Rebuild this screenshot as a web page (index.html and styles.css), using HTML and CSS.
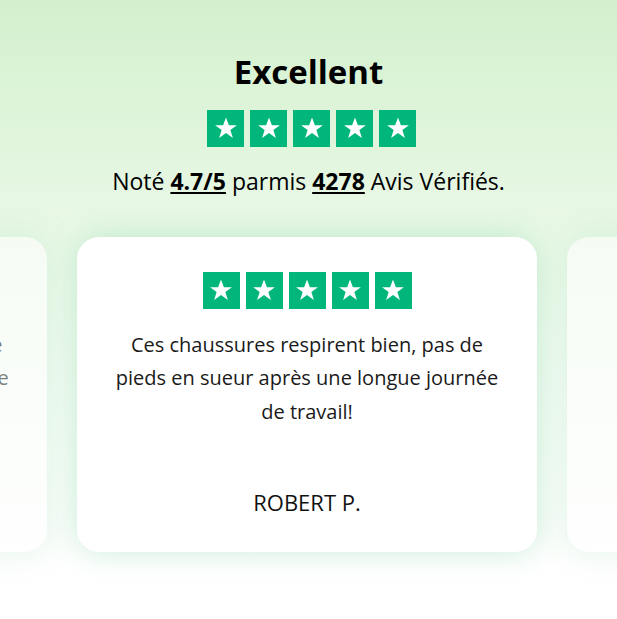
FILE: index.html
```html
<!DOCTYPE html>
<html lang="fr">

<head>
  <meta charset="UTF-8">
  <meta name="viewport" content="width=device-width, initial-scale=1.0">
  <title>avis</title>
  <link rel="stylesheet" href="styles.css">
</head>

<body>
  <!-- en-tête des avis -->
  <section class="reviews">
    <h2 class="reviews-title">Excellent</h2>
    <div class="stars stars-head">
      <span class="star"><svg viewBox="0 0 24 24"><path d="M12 3.6l2.3 6.1h6.4l-5.2 3.9 2 6.4L12 16l-5.5 4 2-6.4-5.2-3.9h6.4z"/></svg></span>
      <span class="star"><svg viewBox="0 0 24 24"><path d="M12 3.6l2.3 6.1h6.4l-5.2 3.9 2 6.4L12 16l-5.5 4 2-6.4-5.2-3.9h6.4z"/></svg></span>
      <span class="star"><svg viewBox="0 0 24 24"><path d="M12 3.6l2.3 6.1h6.4l-5.2 3.9 2 6.4L12 16l-5.5 4 2-6.4-5.2-3.9h6.4z"/></svg></span>
      <span class="star"><svg viewBox="0 0 24 24"><path d="M12 3.6l2.3 6.1h6.4l-5.2 3.9 2 6.4L12 16l-5.5 4 2-6.4-5.2-3.9h6.4z"/></svg></span>
      <span class="star"><svg viewBox="0 0 24 24"><path d="M12 3.6l2.3 6.1h6.4l-5.2 3.9 2 6.4L12 16l-5.5 4 2-6.4-5.2-3.9h6.4z"/></svg></span>
    </div>
    <p class="reviews-score">Noté <b>4.7/5</b> parmis <b>4278</b> Avis Vérifiés.</p>

    <!-- carrousel -->
    <div class="slider">
      <div class="card card-side">
        <div class="stars">
          <span class="star"><svg viewBox="0 0 24 24"><path d="M12 3.6l2.3 6.1h6.4l-5.2 3.9 2 6.4L12 16l-5.5 4 2-6.4-5.2-3.9h6.4z"/></svg></span>
          <span class="star"><svg viewBox="0 0 24 24"><path d="M12 3.6l2.3 6.1h6.4l-5.2 3.9 2 6.4L12 16l-5.5 4 2-6.4-5.2-3.9h6.4z"/></svg></span>
          <span class="star"><svg viewBox="0 0 24 24"><path d="M12 3.6l2.3 6.1h6.4l-5.2 3.9 2 6.4L12 16l-5.5 4 2-6.4-5.2-3.9h6.4z"/></svg></span>
          <span class="star"><svg viewBox="0 0 24 24"><path d="M12 3.6l2.3 6.1h6.4l-5.2 3.9 2 6.4L12 16l-5.5 4 2-6.4-5.2-3.9h6.4z"/></svg></span>
          <span class="star"><svg viewBox="0 0 24 24"><path d="M12 3.6l2.3 6.1h6.4l-5.2 3.9 2 6.4L12 16l-5.5 4 2-6.4-5.2-3.9h6.4z"/></svg></span>
        </div>
        <p class="card-text">Très confortables dès le premier jour, je les porte tous les jours sans aucune gêne</p>
        <p class="card-name">MARIE L.</p>
      </div>

      <div class="card">
        <div class="stars">
          <span class="star"><svg viewBox="0 0 24 24"><path d="M12 3.6l2.3 6.1h6.4l-5.2 3.9 2 6.4L12 16l-5.5 4 2-6.4-5.2-3.9h6.4z"/></svg></span>
          <span class="star"><svg viewBox="0 0 24 24"><path d="M12 3.6l2.3 6.1h6.4l-5.2 3.9 2 6.4L12 16l-5.5 4 2-6.4-5.2-3.9h6.4z"/></svg></span>
          <span class="star"><svg viewBox="0 0 24 24"><path d="M12 3.6l2.3 6.1h6.4l-5.2 3.9 2 6.4L12 16l-5.5 4 2-6.4-5.2-3.9h6.4z"/></svg></span>
          <span class="star"><svg viewBox="0 0 24 24"><path d="M12 3.6l2.3 6.1h6.4l-5.2 3.9 2 6.4L12 16l-5.5 4 2-6.4-5.2-3.9h6.4z"/></svg></span>
          <span class="star"><svg viewBox="0 0 24 24"><path d="M12 3.6l2.3 6.1h6.4l-5.2 3.9 2 6.4L12 16l-5.5 4 2-6.4-5.2-3.9h6.4z"/></svg></span>
        </div>
        <p class="card-text">Ces chaussures respirent bien, pas de pieds en sueur après une longue journée de travail!</p>
        <p class="card-name">ROBERT P.</p>
      </div>

      <div class="card card-side">
        <div class="stars">
          <span class="star"><svg viewBox="0 0 24 24"><path d="M12 3.6l2.3 6.1h6.4l-5.2 3.9 2 6.4L12 16l-5.5 4 2-6.4-5.2-3.9h6.4z"/></svg></span>
          <span class="star"><svg viewBox="0 0 24 24"><path d="M12 3.6l2.3 6.1h6.4l-5.2 3.9 2 6.4L12 16l-5.5 4 2-6.4-5.2-3.9h6.4z"/></svg></span>
          <span class="star"><svg viewBox="0 0 24 24"><path d="M12 3.6l2.3 6.1h6.4l-5.2 3.9 2 6.4L12 16l-5.5 4 2-6.4-5.2-3.9h6.4z"/></svg></span>
          <span class="star"><svg viewBox="0 0 24 24"><path d="M12 3.6l2.3 6.1h6.4l-5.2 3.9 2 6.4L12 16l-5.5 4 2-6.4-5.2-3.9h6.4z"/></svg></span>
          <span class="star"><svg viewBox="0 0 24 24"><path d="M12 3.6l2.3 6.1h6.4l-5.2 3.9 2 6.4L12 16l-5.5 4 2-6.4-5.2-3.9h6.4z"/></svg></span>
        </div>
        <p class="card-text">Livraison rapide et la taille correspond parfaitement, je recommande.</p>
        <p class="card-name">JULIE M.</p>
      </div>
    </div>
  </section>
</body>

</html>
```

FILE: styles.css
```css
body,
html {
  margin: 0;
  min-height: 100%;
}

body {
  font-family: "Open Sans", "Noto Sans", sans-serif;
  color: #111;
  background: linear-gradient(180deg, #d3f0cd 0%, #eefaec 45%, #ffffff 92%);
  overflow: hidden;
}

.reviews {
  display: flex;
  flex-direction: column;
  align-items: center;
  padding-top: 50px;
  padding-bottom: 60px;
}

.reviews-title {
  margin: 0;
  font-size: 33px;
  font-weight: 700;
  line-height: 44px;
  color: #000;
}

.stars {
  display: flex;
  gap: 6.5px;
}

.stars-head {
  margin: 16px 0 0 6px;
}

.star {
  width: 36.5px;
  height: 36.5px;
  background: #00b67a;
  display: flex;
  align-items: center;
  justify-content: center;
}

.star svg {
  width: 30px;
  height: 30px;
  fill: #fff;
}

.reviews-score {
  margin: 18px 0 0;
  font-size: 23px;
  line-height: 32px;
  color: #000;
}

.reviews-score b {
  text-decoration: underline;
}

/* carrousel */
.slider {
  margin-top: 40px;
  width: 100%;
  box-sizing: border-box;
  padding-right: 3px;
  display: flex;
  justify-content: center;
  gap: 30px;
}

.card {
  flex: 0 0 460px;
  box-sizing: border-box;
  height: 315px;
  padding: 35px 36px 0;
  background: #fff;
  border-radius: 22px;
  box-shadow: 0 0 30px rgba(60, 190, 120, 0.26);
  display: flex;
  flex-direction: column;
  align-items: center;
}

.card .stars {
  gap: 6px;
}

.card .star {
  width: 37px;
  height: 37px;
}

.card-side {
  opacity: 0.55;
}

.card-text {
  margin: 19px 0 0;
  font-size: 20px;
  line-height: 33.5px;
  text-align: center;
  color: #1a1a1a;
}

.card-name {
  margin: auto 0 36px;
  font-size: 22px;
  line-height: 28px;
  color: #111;
}
```
